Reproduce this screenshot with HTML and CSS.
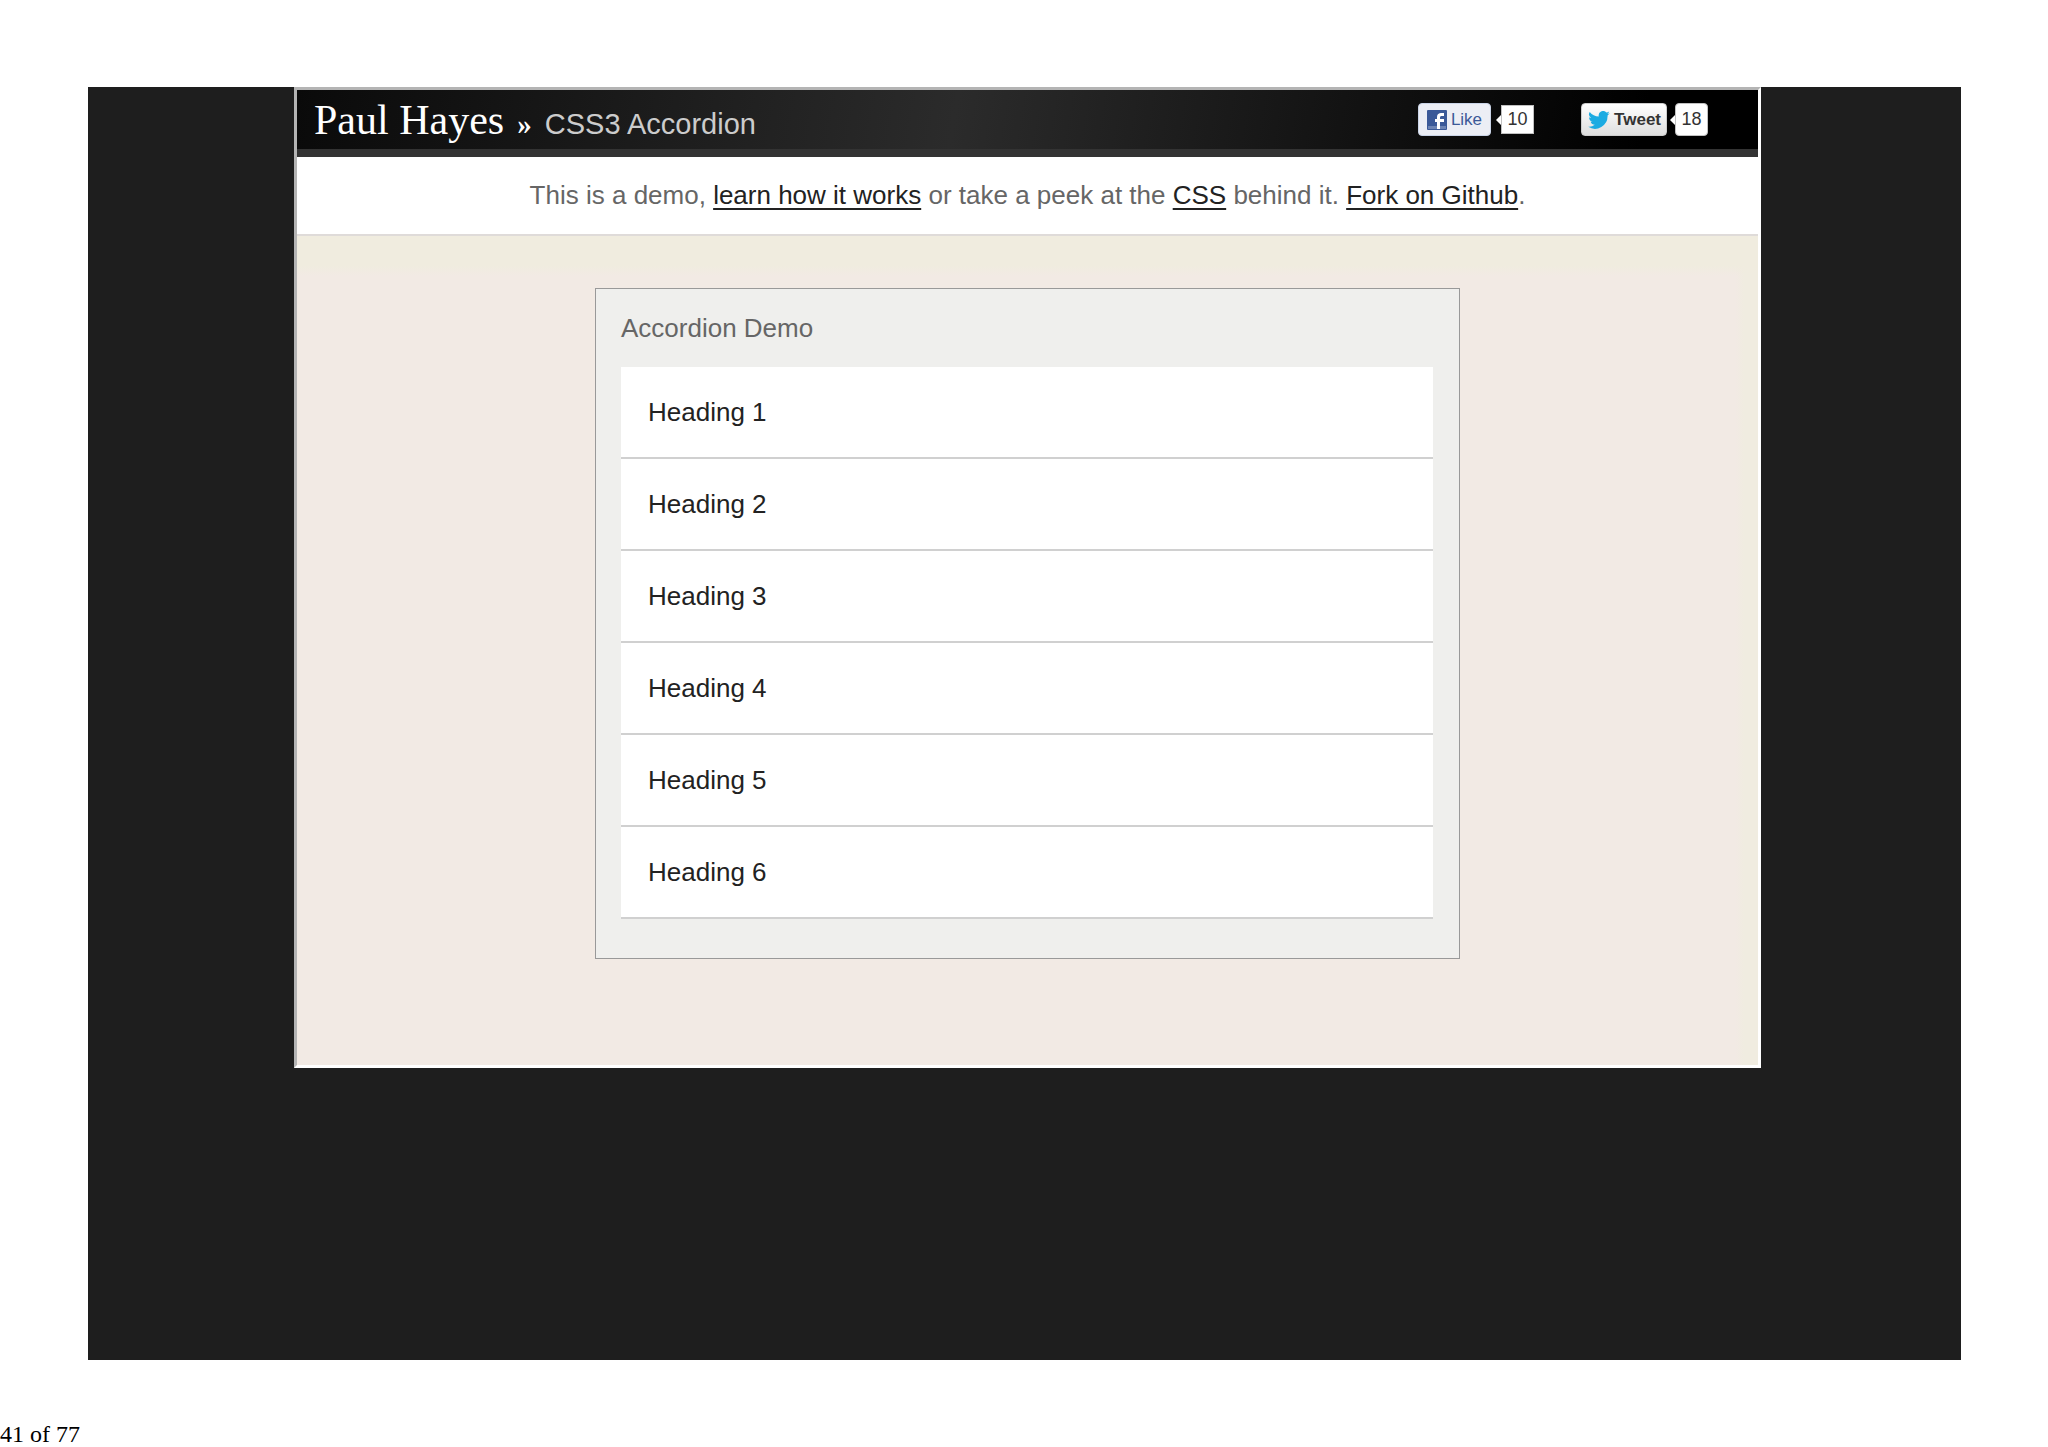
FILE: index.html
```html
<!DOCTYPE html>
<html lang="en">
<head>
    <meta charset="UTF-8">
    <title>CSS3 Accordion</title>
    <link rel="stylesheet" href="styles.css">
</head>
<body>
    <main class="slide">
        <div class="frame">
            <!-- Top bar -->
            <header class="header">
                <h1 class="title"><a class="author" href="#">Paul Hayes</a> <span class="arrow">»</span> CSS3 Accordion</h1>
                <div class="share">
                    <button class="btn like" type="button">
                        <svg width="20" height="20" viewBox="0 0 20 20" aria-hidden="true">
                            <rect width="20" height="20" rx="1" fill="#3b5998"/>
                            <rect x="1" y="16" width="18" height="3" fill="#6d84b4"/>
                            <path d="M10 19v-7H8V9h2V7c0-3 2-4 4-4h3v3h-2c-1 0-2 .4-2 1.500V9h4v3h-4v7z" fill="#fff"/>
                        </svg>
                        Like
                    </button>
                    <span class="count like-count">10</span>
                    <button class="btn tweet" type="button">
                        <svg width="22" height="18" viewBox="0 0 24 20" aria-hidden="true">
                            <path d="M24 2.400a10 10 0 0 1-2.800.8A5 5 0 0 0 23.300.500a10 10 0 0 1-3.100 1.200A4.900 4.900 0 0 0 11.800 6.200 14 14 0 0 1 1.700 1a4.900 4.900 0 0 0 1.500 6.600A4.900 4.900 0 0 1 1 7v.1a4.900 4.900 0 0 0 3.900 4.800 5 5 0 0 1-2.200.1 4.900 4.900 0 0 0 4.600 3.400A9.900 9.900 0 0 1 0 17.500 14 14 0 0 0 21.500 5z" fill="#1cabe2"/>
                        </svg>
                        Tweet
                    </button>
                    <span class="count tweet-count">18</span>
                </div>
            </header>

            <p class="intro">This is a demo, <a href="#">learn how it works</a> or take a peek at the <a href="#">CSS</a> behind it. <a href="#">Fork on Github</a>.</p>

            <!-- Accordion -->
            <div class="content">
                <section class="accordion">
                    <h2>Accordion Demo</h2>
                    <ul>
                        <li><a href="#one">Heading 1</a></li>
                        <li><a href="#two">Heading 2</a></li>
                        <li><a href="#three">Heading 3</a></li>
                        <li><a href="#four">Heading 4</a></li>
                        <li><a href="#five">Heading 5</a></li>
                        <li><a href="#six">Heading 6</a></li>
                    </ul>
                </section>
            </div>
        </div>
    </main>
    <footer class="page-number">41 of 77</footer>
</body>
</html>
```
FILE: styles.css
```css
* {
    box-sizing: border-box;
}
body {
    margin: 0;
    background: #fff;
    font-family: "Liberation Sans", Arial, sans-serif;
    font-size: 26px;
    color: #666;
}
.slide {
    margin: 87px 87px 60px 88px;
    padding: 0 200px 292px 206px;
    background: #1e1e1e;
}
.frame {
    border: 3px solid #fff;
    border-top-color: #b4b4b4;
    border-left-color: #b4b4b4;
}

/* top bar */
.header {
    display: flex;
    justify-content: space-between;
    align-items: center;
    height: 67px;
    padding: 0 50px 0 17px;
    border-bottom: 8px solid #333;
    background: linear-gradient(100deg, #0a0a0a, #2b2b2b 45%, #000 92%);
}
.title {
    margin: 0;
    font-size: 29px;
    font-weight: normal;
    color: #ccc;
}
.author {
    font-family: "Liberation Serif", serif;
    font-size: 42px;
    color: #fff;
    text-decoration: none;
}
.arrow {
    font-family: "Liberation Serif", serif;
    font-weight: bold;
    color: #fff;
    margin: 0 5px;
}
.share {
    display: flex;
    align-items: center;
}
.btn {
    display: flex;
    align-items: center;
    gap: 4px;
    height: 33px;
    padding: 0 8px;
    border: 1px solid #cad4e7;
    border-radius: 4px;
    background: #eceef5;
    font-family: inherit;
    font-size: 17px;
    color: #3b5998;
}
.tweet {
    margin-left: 47px;
    padding: 0 5px 0 6px;
    border-color: #ccc;
    background: linear-gradient(#fff, #dedede);
    font-weight: bold;
    color: #333;
}
.count {
    display: flex;
    align-items: center;
    justify-content: center;
    position: relative;
    height: 29px;
    width: 33px;
    margin-left: 10px;
    border: 1px solid #c1c1c1;
    background: #fff;
    font-size: 18px;
    color: #333;
}
.count::before {
    content: "";
    position: absolute;
    left: -6px;
    border: 5px solid transparent;
    border-left: 0;
    border-right-color: #fff;
}
.tweet-count {
    height: 33px;
    margin-left: 8px;
    border-radius: 4px;
}

.intro {
    margin: 0;
    padding: 23px 0 24px;
    border-bottom: 2px solid #dfdbd9;
    background: #fff;
    line-height: 30px;
    text-align: center;
}
.intro a {
    color: #222;
    text-decoration: underline 2px;
    text-underline-offset: 4px;
}

/* accordion */
.content {
    padding: 52px 0 106px;
    background:
        linear-gradient(#f0ecdf, #f0ecdf 30px, transparent 40px),
        linear-gradient(to left, #f0ece0, #f0ece0 14px, transparent 22px),
        #f2eae4;
}
.accordion {
    max-width: 865px;
    margin: 0 auto;
    padding: 24px 26px 39px 25px;
    border: 1px solid #999;
    background: #efefed;
}
.accordion h2 {
    margin: 0 0 24px;
    font-size: 26px;
    font-weight: normal;
    line-height: 30px;
}
.accordion ul {
    margin: 0;
    padding: 0;
    list-style: none;
}
.accordion a {
    display: block;
    padding: 30px 27px;
    border-bottom: 2px solid #d0d0d0;
    background: #fff;
    line-height: 30px;
    color: #222;
    text-decoration: none;
}

.page-number {
    font-family: "Liberation Serif", "Times New Roman", serif;
    font-size: 24px;
    line-height: 28px;
    color: #000;
}
```
